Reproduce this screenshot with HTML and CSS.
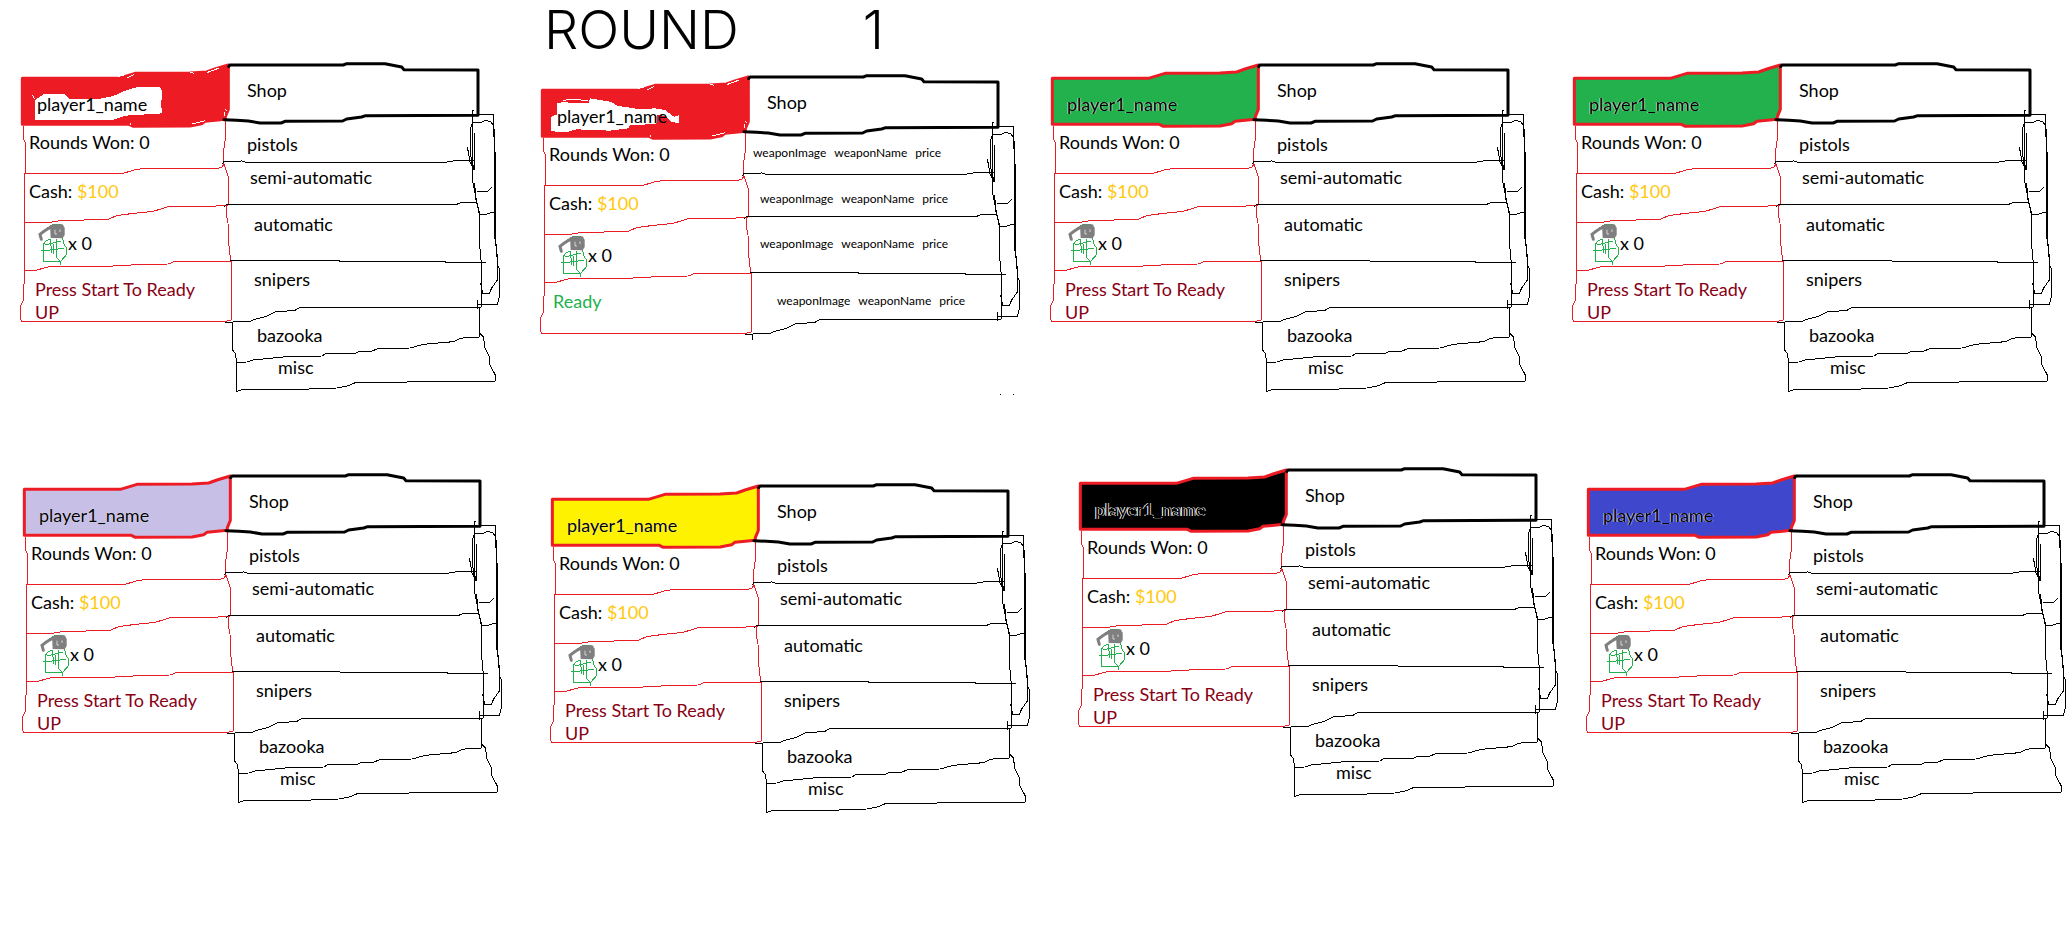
FILE: index.html
```html
<!DOCTYPE html>
<html lang="en">
<head>
<meta charset="utf-8">
<title>Round 1</title>
<link rel="stylesheet" href="styles.css">
</head>
<body>
<svg class="defs" aria-hidden="true">
  <defs>
    <symbol id="tag" viewBox="0 0 1500 1050">
      <path class="tag-box" d="M37 85H325L345 79L375 70L540 69L590 66L615 57L655 45V178L646 200V208L585 214L575 221L540 228L370 229L358 223H37Z"/>
    </symbol>
    <symbol id="frame" viewBox="0 0 1500 1050">
      <g class="line red">
        <path d="M40 228V265L46 278V370L43 372V660L44 700L40 705V752L32 768V808L35 814H645L664 810V634"/>
        <path d="M44 370H340L375 359L405 355H625L636 351L641 343"/>
        <path d="M646 212L647 262L641 300V340L648 360L655 382V465"/>
        <path d="M43 517H120L150 512L295 508L320 497L370 490L430 484L475 470L600 469L655 466"/>
        <path d="M650 466L649 495L654 520L656 580L662 632"/>
        <path d="M43 660L78 661L95 656L118 650L290 649L400 643L475 642L495 634H664"/>
      </g>
      <g class="line black">
        <path d="M637 342L642 334L695 333L710 337H1305L1335 332L1393 331"/>
        <path d="M643 469L652 463H1340L1352 458L1402 457"/>
        <path d="M660 632L1305 634L1307 637H1427"/>
        <path d="M645 817L720 814L735 808L770 799L795 786L855 781L870 772H1413"/>
        <path d="M1392 180H1388V395L1400 455L1408 492V575L1414 640V772"/>
        <path d="M1390 193H1450V230L1456 320V555L1463 648L1468 655V740L1462 763H1403V750V778"/>
        <path d="M1452 230L1453 320V550L1462 620V690L1445 714L1438 730H1418L1412 700"/>
        <path d="M1393 248V358L1385 335L1380 300V240L1388 215"/>
        <path d="M1372 290L1380 335L1393 360"/>
        <path d="M1388 217H1415L1425 211L1442 215L1452 228"/>
        <path d="M1400 425L1432 426L1438 418L1446 412M1394 400L1398 450L1410 492H1430L1452 486"/>
      </g>
      <path class="line black thick" d="M656 50L660 45H1000L1010 41H1125L1175 51L1182 59L1404 60V196L1067 197L1055 201L1010 207L998 213L825 214L813 219H750L715 213L680 211L642 209"/>
    </symbol>
    <symbol id="extra" viewBox="0 0 1500 1050">
      <g class="line black">
        <path d="M668 815V900L677 912L679 937L710 936L730 930L830 920L935 918L948 911L1035 910L1045 905H1080L1105 896L1200 894L1240 883L1330 875L1345 868L1365 862L1408 861V775"/>
        <path d="M680 937V1024L698 1018H870L980 1014L1015 1007L1038 997H1185L1200 994H1455L1456 975L1440 945L1438 920L1425 895L1420 860L1410 850"/>
      </g>
    </symbol>
    <symbol id="grenade" viewBox="0 0 96 132">
      <path class="line green" d="M14 34L29 18L48 6L76 4M44 48L30 54L21 66V115H74L92 94V76L84 64L80 46M44 48L46 90M60 48L62 90M26 66L74 54M16 84L84 76M54 62L52 92M60 90L62 104L74 116L75 126M92 94L74 116"/>
      <path class="line gray" d="M16 49L12 34L24 25L38 16L54 8H78"/>
      <path class="gray-fill" d="M42 6H80L86 14V36L80 46L44 45Z"/>
      <path class="line white fine" d="M57 20V33H63M72 19V27"/>
    </symbol>
  </defs>
</svg>

<header class="heading"><h1 class="round"><span>ROUND</span> <span>1</span></h1></header>

<main>
<section class="row row-top">
  <article class="panel red-team">
    <svg class="sketch" viewBox="0 0 1500 1050" aria-hidden="true"><use href="#tag"/><path class="erased" d="M75 210V150L100 133L165 132L178 146L265 147L310 138L340 124L385 110H450L457 125L453 165L458 190L345 197L312 209Z"/><path class="line white" d="M325 79L345 74M350 84L372 74M540 66L552 70M590 68L628 54M645 178L652 184M644 198V186M545 222L585 212M360 220L364 226M68 135L74 148"/><use href="#frame"/><use href="#extra"/></svg>
    <div class="status">
      <h2 class="name">player1_name</h2>
      <p>Rounds Won: 0</p>
      <p>Cash: <span class="cash">$100</span></p>
      <p class="grenades"><svg class="grenade" aria-hidden="true"><use href="#grenade"/></svg>x 0</p>
      <button class="ready" type="button">Press Start To Ready UP</button>
    </div>
    <div class="shop">
      <h3>Shop</h3>
      <button type="button">pistols</button>
      <button class="in-1" type="button">semi-automatic</button>
      <button class="in-2" type="button">automatic</button>
      <button class="in-2" type="button">snipers</button>
      <button class="in-3" type="button">bazooka</button>
      <button class="in-4" type="button">misc</button>
    </div>
  </article>

  <article class="panel red-team drop-12">
    <svg class="sketch" viewBox="0 0 1500 1050" aria-hidden="true"><use href="#tag"/><path class="erased" d="M64 208V164L80 158V124L108 119L118 124H175L180 109L240 119L265 132L300 137L330 142L375 139L405 144L432 164L447 160V184L425 179L405 162L382 158V184L330 189L300 190L295 199L240 206L140 202L110 210Z"/><path class="line white" d="M100 115L130 111L160 115H175M325 79L345 74M350 84L372 74M540 66L552 70M590 68L628 54M645 178L652 184M644 198V186M545 222L585 212M360 220L364 226"/><use href="#frame"/><path class="line black" d="M668 815V833M1410 996H1413M1450 996H1453"/></svg>
    <div class="status">
      <h2 class="name">player1_name</h2>
      <p>Rounds Won: 0</p>
      <p>Cash: <span class="cash">$100</span></p>
      <p class="grenades"><svg class="grenade" aria-hidden="true"><use href="#grenade"/></svg>x 0</p>
      <p class="is-ready">Ready</p>
    </div>
    <div class="shop weapons">
      <h3>Shop</h3>
      <button class="weapon" type="button"><span>weaponImage</span> <span>weaponName</span> <span>price</span></button>
      <button class="weapon in-2" type="button"><span>weaponImage</span> <span>weaponName</span> <span>price</span></button>
      <button class="weapon in-2" type="button"><span>weaponImage</span> <span>weaponName</span> <span>price</span></button>
      <button class="weapon in-3" type="button"><span>weaponImage</span> <span>weaponName</span> <span>price</span></button>
    </div>
  </article>

  <article class="panel green-team">
    <svg class="sketch" viewBox="0 0 1500 1050" aria-hidden="true"><use href="#tag"/><use href="#frame"/><use href="#extra"/></svg>
    <div class="status">
      <h2 class="name">player1_name</h2>
      <p>Rounds Won: 0</p>
      <p>Cash: <span class="cash">$100</span></p>
      <p class="grenades"><svg class="grenade" aria-hidden="true"><use href="#grenade"/></svg>x 0</p>
      <button class="ready" type="button">Press Start To Ready UP</button>
    </div>
    <div class="shop">
      <h3>Shop</h3>
      <button type="button">pistols</button>
      <button class="in-1" type="button">semi-automatic</button>
      <button class="in-2" type="button">automatic</button>
      <button class="in-2" type="button">snipers</button>
      <button class="in-3" type="button">bazooka</button>
      <button class="in-4" type="button">misc</button>
    </div>
  </article>

  <article class="panel green-team">
    <svg class="sketch" viewBox="0 0 1500 1050" aria-hidden="true"><use href="#tag"/><use href="#frame"/><use href="#extra"/></svg>
    <div class="status">
      <h2 class="name">player1_name</h2>
      <p>Rounds Won: 0</p>
      <p>Cash: <span class="cash">$100</span></p>
      <p class="grenades"><svg class="grenade" aria-hidden="true"><use href="#grenade"/></svg>x 0</p>
      <button class="ready" type="button">Press Start To Ready UP</button>
    </div>
    <div class="shop">
      <h3>Shop</h3>
      <button type="button">pistols</button>
      <button class="in-1" type="button">semi-automatic</button>
      <button class="in-2" type="button">automatic</button>
      <button class="in-2" type="button">snipers</button>
      <button class="in-3" type="button">bazooka</button>
      <button class="in-4" type="button">misc</button>
    </div>
  </article>
</section>

<section class="row row-bottom">
  <article class="panel lavender-team drop-6">
    <svg class="sketch" viewBox="0 0 1500 1050" aria-hidden="true"><use href="#tag"/><use href="#frame"/><use href="#extra"/></svg>
    <div class="status">
      <h2 class="name">player1_name</h2>
      <p>Rounds Won: 0</p>
      <p>Cash: <span class="cash">$100</span></p>
      <p class="grenades"><svg class="grenade" aria-hidden="true"><use href="#grenade"/></svg>x 0</p>
      <button class="ready" type="button">Press Start To Ready UP</button>
    </div>
    <div class="shop">
      <h3>Shop</h3>
      <button type="button">pistols</button>
      <button class="in-1" type="button">semi-automatic</button>
      <button class="in-2" type="button">automatic</button>
      <button class="in-2" type="button">snipers</button>
      <button class="in-3" type="button">bazooka</button>
      <button class="in-4" type="button">misc</button>
    </div>
  </article>

  <article class="panel yellow-team drop-16">
    <svg class="sketch" viewBox="0 0 1500 1050" aria-hidden="true"><use href="#tag"/><use href="#frame"/><use href="#extra"/></svg>
    <div class="status">
      <h2 class="name">player1_name</h2>
      <p>Rounds Won: 0</p>
      <p>Cash: <span class="cash">$100</span></p>
      <p class="grenades"><svg class="grenade" aria-hidden="true"><use href="#grenade"/></svg>x 0</p>
      <button class="ready" type="button">Press Start To Ready UP</button>
    </div>
    <div class="shop">
      <h3>Shop</h3>
      <button type="button">pistols</button>
      <button class="in-1" type="button">semi-automatic</button>
      <button class="in-2" type="button">automatic</button>
      <button class="in-2" type="button">snipers</button>
      <button class="in-3" type="button">bazooka</button>
      <button class="in-4" type="button">misc</button>
    </div>
  </article>

  <article class="panel black-team">
    <svg class="sketch" viewBox="0 0 1500 1050" aria-hidden="true"><use href="#tag"/><use href="#frame"/><use href="#extra"/></svg>
    <div class="status">
      <h2 class="name">player1_name</h2>
      <p>Rounds Won: 0</p>
      <p>Cash: <span class="cash">$100</span></p>
      <p class="grenades"><svg class="grenade" aria-hidden="true"><use href="#grenade"/></svg>x 0</p>
      <button class="ready" type="button">Press Start To Ready UP</button>
    </div>
    <div class="shop">
      <h3>Shop</h3>
      <button type="button">pistols</button>
      <button class="in-1" type="button">semi-automatic</button>
      <button class="in-2" type="button">automatic</button>
      <button class="in-2" type="button">snipers</button>
      <button class="in-3" type="button">bazooka</button>
      <button class="in-4" type="button">misc</button>
    </div>
  </article>

  <article class="panel blue-team drop-6">
    <svg class="sketch" viewBox="0 0 1500 1050" aria-hidden="true"><use href="#tag"/><use href="#frame"/><use href="#extra"/></svg>
    <div class="status">
      <h2 class="name">player1_name</h2>
      <p>Rounds Won: 0</p>
      <p>Cash: <span class="cash">$100</span></p>
      <p class="grenades"><svg class="grenade" aria-hidden="true"><use href="#grenade"/></svg>x 0</p>
      <button class="ready" type="button">Press Start To Ready UP</button>
    </div>
    <div class="shop">
      <h3>Shop</h3>
      <button type="button">pistols</button>
      <button class="in-1" type="button">semi-automatic</button>
      <button class="in-2" type="button">automatic</button>
      <button class="in-2" type="button">snipers</button>
      <button class="in-3" type="button">bazooka</button>
      <button class="in-4" type="button">misc</button>
    </div>
  </article>
</section>
</main>
</body>
</html>
```

FILE: styles.css
```css
* { box-sizing: border-box; }

body {
  margin: 0;
  background: #fff;
  color: #000;
  font: 18px/23px Lato, "Open Sans", sans-serif;
  overflow-x: hidden;
}

h1, h2, h3, p { margin: 0; font-size: inherit; font-weight: 400; }

button {
  display: block;
  padding: 0;
  border: 0;
  background: none;
  color: inherit;
  font: inherit;
  text-align: left;
  cursor: pointer;
}

.defs { display: none; }

/* Heading */
.heading { height: 50px; padding: 2px 0 0 544px; }
.round {
  display: flex;
  gap: 124px;
  font: 300 54px/56px Inter, sans-serif;
}

/* Rows of player panels */
.row { display: grid; }
.row-top {
  height: 405px;
  padding-left: 10px;
  grid-template-columns: minmax(0, 520fr) minmax(0, 510fr) minmax(0, 522fr) minmax(0, 508fr);
}
.row-bottom {
  padding-left: 12px;
  grid-template-columns: minmax(0, 528fr) minmax(0, 528fr) minmax(0, 508fr) minmax(0, 494fr);
}
.drop-6 { margin-top: 6px; }
.drop-12 { margin-top: 12px; }
.drop-16 { margin-top: 16px; }

.panel {
  display: grid;
  grid-template-columns: 237px 1fr;
  align-items: start;
  align-content: start;
}
.sketch {
  grid-area: 1 / 1 / 2 / 3;
  width: 500px;
  height: 350px;
}

/* Left column: player status */
.status {
  grid-area: 1 / 1;
  display: grid;
  grid-template-rows: 38px 49px 52px 46px auto;
  padding: 43px 0 0 19px;
}
.name { padding-left: 8px; }
.cash { color: #ffc90e; }
.grenades { display: flex; padding-left: 7px; }
.grenade { width: 32px; height: 44px; margin-top: -9px; }
.ready { width: 184px; padding-left: 6px; color: #880015; }
.is-ready { padding-left: 4px; color: #22b14c; }

/* Right column: shop */
.shop {
  grid-area: 1 / 2;
  display: grid;
  grid-template-rows: 54px 33px 47px 55px 56px 32px auto;
  align-items: start;
  padding-top: 29px;
}
.shop.weapons {
  grid-template-rows: 53px 46px 45px 57px auto;
  margin-left: -14px;
}
.weapons h3 { padding-left: 14px; }
.in-1 { padding-left: 3px; }
.in-2 { padding-left: 7px; }
.in-3 { padding-left: 10px; }
.in-4 { padding-left: 31px; }
.weapon { display: flex; gap: 8px; font-size: 12px; line-height: 18px; }
.weapon.in-3 { padding-left: 24px; }

/* Drawing strokes */
.line { fill: none; stroke-width: 3; shape-rendering: crispEdges; }
.red { stroke: #ed1c24; }
.black { stroke: #000; }
.thick { stroke-width: 9; stroke-linejoin: round; stroke-linecap: round; shape-rendering: auto; }
.green { stroke: #22b14c; }
.gray { stroke: #7f7f7f; stroke-width: 9; stroke-linecap: round; shape-rendering: auto; }
.gray-fill { fill: #7f7f7f; }
.white { stroke: #fff; }
.fine { stroke-width: 2; shape-rendering: auto; }
.erased { fill: #fff; shape-rendering: crispEdges; }
.tag-box { fill: var(--team); stroke: #ed1c24; stroke-width: 9; stroke-linejoin: round; }

/* Team colours */
.red-team { --team: #ed1c24; }
.green-team { --team: #22b14c; }
.lavender-team { --team: #c8bfe7; }
.yellow-team { --team: #fff200; }
.black-team { --team: #000; }
.blue-team { --team: #3f48cc; }

.lavender-team .name, .yellow-team .name { text-shadow: 0 0 1px #fff; }
.green-team .name, .blue-team .name { text-shadow: -1px 0 0 #ffffff99, 1px 0 0 #ffffff66; }
.black-team .name { text-shadow: -1px 0 0 #fff, 1px 0 0 #ffffffcc; }
```
